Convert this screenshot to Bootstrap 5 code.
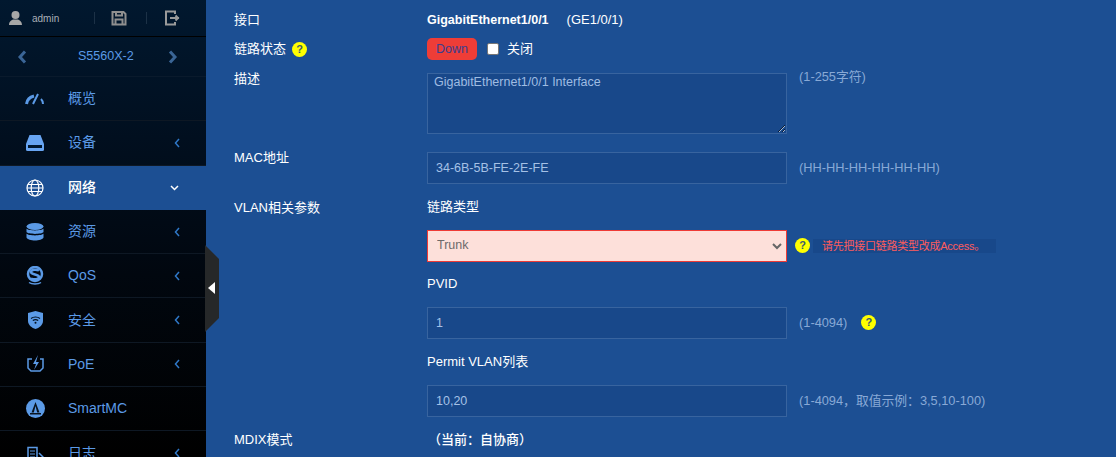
<!DOCTYPE html>
<html lang="zh">
<head>
  <meta charset="UTF-8" />
  <title>S5560X-2</title>
  <link href="https://cdn.jsdelivr.net/npm/bootstrap@5.3.3/dist/css/bootstrap.min.css" rel="stylesheet">
  <style>
    html, body { height: 457px; overflow: hidden; }
    body { background: #1c4f93; font-family: "Liberation Sans", "Noto Sans CJK SC", sans-serif; font-size: 13px; color: #fff; }
    .shell { height: 457px; }
    .side { width: 206px; height: 457px; flex: none; overflow: hidden; background: linear-gradient(180deg, #01182f 0%, #010f1f 30%, #01070f 60%, #000 100%); }
    .side-top { height: 37px; flex: none; border-bottom: 1px solid #000; padding-left: 8px; color: #a9b0b8; font-size: 10px; }
    .side-top .tsep { width: 1px; height: 12px; background: #1c3146; }
    .side-dev { height: 40px; flex: none; border-bottom: 1px solid #0a1a2c; color: #5b9ae6; font-size: 12.5px; padding-left: 17px; }
    .side-item { height: 44.3px; flex: none; border-bottom: 1px solid #0e1824; color: #5b9ae6; font-size: 14px; }
    .side-item.on { background: #1c4f93; color: #fff; font-weight: 500; border-bottom: 0; }
    .ico { width: 22px; margin-left: 24px; margin-right: 22px; display: flex; justify-content: center; flex: none; }
    .arw { margin-left: auto; margin-right: 26px; }
    .handle { position: absolute; left: 205px; top: 245px; width: 14px; height: 87px; background: #262829; clip-path: polygon(0 0, 100% 14px, 100% 73px, 0 100%); }
    .handle i { position: absolute; left: 3px; top: 37px; border-style: solid; border-width: 6px 7px 6px 0; border-color: transparent #fff transparent transparent; }
    .main { padding-left: 28px; position: relative; min-width: 0; }
    .lbl { width: 193px; flex: none; }
    .fld { width: 360px; flex: none; }
    .fbox, .fbox:focus { background: #18488a; border: 1px solid #38649f; border-radius: 0; color: #a5c1e6; font-size: 12.5px; height: 32px; padding: 0 8px; box-shadow: none; }
    textarea.fbox, textarea.fbox:focus { height: 61px; padding: 1px 6px; line-height: 14px; color: #9fbce2; font-size: 12.5px; }
    .hint { color: #88a9d6; margin-left: 12px; font-size: 12.8px; }
    .sel, .sel:focus { background-color: #fde0da; background-image: url("data:image/svg+xml,%3csvg xmlns='http://www.w3.org/2000/svg' viewBox='0 0 10 8'%3e%3cpath fill='none' stroke='%23666' stroke-width='2' d='M1 2l4 4 4-4'/%3e%3c/svg%3e"); background-size: 10px 8px; background-position: right 4px center; border: 1px solid #ef3b36; border-radius: 0; color: #6d6a6a; font-size: 12.5px; height: 32px; padding: 0 9px; box-shadow: none; }
    .qm { width: 15px; height: 15px; border-radius: 50%; background: #ff0; color: #3c5a6e; font-size: 11px; font-weight: bold; line-height: 15px; text-align: center; display: inline-block; flex: none; }
    .errtxt { background: #18488a; color: #ff5c5c; font-size: 11px; letter-spacing: -.25px; line-height: 14px; padding: 0 9px; width: 183px; margin-left: 3px; white-space: nowrap; height: 14px; }
    .downbtn { background: #ee3d37; color: #3a3f8f; border-radius: 5px; width: 50px; height: 22px; line-height: 22px; text-align: center; font-size: 12.5px; }
    .chk { width: 12px; height: 12px; margin: 0 8px 0 10px; border-radius: 2px; background: #fff; border: 1px solid #767676; flex: none; }
    .r-name { height: 40px; }
    .r-status { height: 22px; margin-top: -2px; }
    .sub { height: 23px; }
    .ifname { font-size: 12.5px; }
  </style>
</head>
<body>
  <div class="d-flex shell position-relative">
    <div class="side d-flex flex-column">
      <div class="side-top d-flex align-items-center">
        <svg width="16" height="16" viewBox="0 0 16 16" fill="#a7a7a7"><circle cx="7.500" cy="5" r="4"/><path d="M1 15c0-4 3-5 4-5.500h5c1 .5 4 1.500 4 5.500z"/></svg>
        <span class="ms-2" style="width:46px">admin</span>
        <span class="tsep ms-3"></span>
        <svg class="ms-3" width="16" height="16" viewBox="0 0 16 16" fill="none" stroke="#8f8f8f" stroke-width="2"><path d="M1.500 2h11l2 2v10.500h-13z"/><path d="M5 2v3.500h6V2M4.500 14.500V9.500h7v5"/></svg>
        <span class="tsep" style="margin-left:19px"></span>
        <svg style="margin-left:17px" width="16" height="16" viewBox="0 0 16 16" fill="none" stroke="#9a9a9a" stroke-width="2"><path d="M11 4V1.500H2v13h9V12M6 8h9"/><path d="M11.500 5.500L14 8l-2.500 2.500"/></svg>
      </div>
      <div class="side-dev d-flex align-items-center">
        <svg width="10" height="14" viewBox="0 0 10 14" fill="none" stroke="#3a6596" stroke-width="3"><path d="M8 1.500L3 7l5 5.500"/></svg>
        <span style="width:90px;margin-left:51px">S5560X-2</span>
        <svg width="10" height="14" viewBox="0 0 10 14" fill="none" stroke="#3a6596" stroke-width="3"><path d="M2 1.500L7 7l-5 5.500"/></svg>
      </div>

      <div class="side-item d-flex align-items-center">
        <span class="ico"><svg width="20" height="12" viewBox="0 0 20 12" fill="none" stroke="#5b9ae6"><path stroke-width="3" d="M1.500 11C2 7 5 4 9 3"/><path stroke-width="2" d="M8 11l5-10M18 11c0-2-1-4-2-5"/></svg></span>
        <span>概览</span>
      </div>
      <div class="side-item d-flex align-items-center">
        <span class="ico"><svg width="18" height="16" viewBox="0 0 18 16" fill="#68a5f2"><path d="M3.500 0h11L18 9v5.500a1.500 1.500 0 0 1-1.500 1.500h-15A1.500 1.500 0 0 1 0 14.500V9z"/><rect x="2" y="10" width="14" height="3" fill="#01182f"/></svg></span>
        <span>设备</span>
        <svg class="arw" width="6" height="10" viewBox="0 0 6 10" fill="none" stroke="#2f78c8" stroke-width="1.500"><path d="M5 1L1.500 5 5 9"/></svg>
      </div>
      <div class="side-item on d-flex align-items-center">
        <span class="ico"><svg width="18" height="18" viewBox="0 0 18 18" fill="none" stroke="#fff" stroke-width="1.200"><circle cx="9" cy="9" r="8"/><ellipse cx="9" cy="9" rx="3.800" ry="8"/><path d="M2 5.500h14M1 9h16M2 12.500h14"/></svg></span>
        <span>网络</span>
        <svg class="arw" style="margin-right:27px" width="9" height="6" viewBox="0 0 9 6" fill="none" stroke="#fff" stroke-width="1.500"><path d="M1 1l3.500 3.500L8 1"/></svg>
      </div>
      <div class="side-item d-flex align-items-center">
        <span class="ico"><svg width="18" height="18" viewBox="0 0 18 18" fill="#5b9ae6"><ellipse cx="9" cy="3.500" rx="8.500" ry="3.500"/><path d="M.5 5.500C2 8 16 8 17.500 5.500V9C16 11.500 2 11.500 .5 9zM.5 10.500C2 13 16 13 17.500 10.500V14.500C16 18.500 2 18.500 .5 14.500z"/></svg></span>
        <span>资源</span>
        <svg class="arw" width="6" height="10" viewBox="0 0 6 10" fill="none" stroke="#2f78c8" stroke-width="1.500"><path d="M5 1L1.500 5 5 9"/></svg>
      </div>
      <div class="side-item d-flex align-items-center">
        <span class="ico"><svg width="18" height="19" viewBox="0 0 18 19" fill="none"><circle cx="9" cy="8" r="7" stroke="#5b9ae6" stroke-width="2.500"/><path d="M13 4.500C10 3 5 3.500 5 6c0 3 8 2 8 5 0 2.500-5 3-8 1.500" stroke="#5b9ae6" stroke-width="2.500"/><path d="M3 16.500c3 2 9 2 12 0" stroke="#5b9ae6" stroke-width="1.500"/></svg></span>
        <span>QoS</span>
        <svg class="arw" width="6" height="10" viewBox="0 0 6 10" fill="none" stroke="#2f78c8" stroke-width="1.500"><path d="M5 1L1.500 5 5 9"/></svg>
      </div>
      <div class="side-item d-flex align-items-center">
        <span class="ico"><svg width="15" height="18" viewBox="0 0 15 18" fill="#5b9ae6"><path d="M7.500 0L15 2v8c0 4-4 7-7.500 8C4 17 0 14 0 10V2z"/><path d="M3 7.500c2.500-2 6.500-2 9 0M4.800 9.500c1.500-1 4-1 5.400 0" fill="none" stroke="#021020" stroke-width="1.100"/><circle cx="7.500" cy="11.800" r="1" fill="#021020"/></svg></span>
        <span>安全</span>
        <svg class="arw" width="6" height="10" viewBox="0 0 6 10" fill="none" stroke="#2f78c8" stroke-width="1.500"><path d="M5 1L1.500 5 5 9"/></svg>
      </div>
      <div class="side-item d-flex align-items-center">
        <span class="ico"><svg width="17" height="18" viewBox="0 0 17 18" fill="none"><path d="M5 4H1v9l3 3h9l3-3V4h-3" stroke="#5b9ae6" stroke-width="1.500"/><path d="M11 0L6 9h3l-2 6 5-8H9z" fill="#5b9ae6"/></svg></span>
        <span>PoE</span>
        <svg class="arw" width="6" height="10" viewBox="0 0 6 10" fill="none" stroke="#2f78c8" stroke-width="1.500"><path d="M5 1L1.500 5 5 9"/></svg>
      </div>
      <div class="side-item d-flex align-items-center">
        <span class="ico"><svg width="19" height="19" viewBox="0 0 19 19"><circle cx="9.500" cy="9.500" r="9.500" fill="#5b9ae6"/><path d="M9.500 3L5.500 13.500h2.300l1.700-6.500 1.700 6.500h2.300zM4 14h11v1.500H4z" fill="#0a1420"/></svg></span>
        <span>SmartMC</span>
      </div>
      <div class="side-item d-flex align-items-center">
        <span class="ico"><svg width="17" height="19" viewBox="0 0 17 19" fill="none" stroke="#5b9ae6"><path stroke-width="1.500" d="M1 3.500h9V18H1z"/><path stroke-width="1.200" d="M3 7h5M3 10h5M3 13h5"/><path stroke-width="1.500" d="M12 9l4 4-3 3"/></svg></span>
        <span>日志</span>
        <svg class="arw" width="6" height="10" viewBox="0 0 6 10" fill="none" stroke="#2f78c8" stroke-width="1.500"><path d="M5 1L1.500 5 5 9"/></svg>
      </div>
    </div>
    <div class="handle"><i></i></div>

    <div class="main flex-grow-1">
      <div class="d-flex align-items-center r-name">
        <div class="lbl">接口</div>
        <div><b class="ifname">GigabitEthernet1/0/1</b><span style="margin-left:18px">(GE1/0/1)</span></div>
      </div>
      <div class="d-flex align-items-center r-status">
        <div class="lbl d-flex align-items-center">链路状态<span class="qm" style="margin-left:6px">?</span></div>
        <div class="downbtn">Down</div>
        <span class="chk"></span><span>关闭</span>
      </div>
      <div class="d-flex mt-0" style="padding-top:13px">
        <div class="lbl" style="margin-top:-4px">描述</div>
        <textarea class="form-control fbox fld">GigabitEthernet1/0/1 Interface</textarea>
        <div class="hint" style="margin-top:-6px">(1-255字符)</div>
      </div>
      <div class="d-flex" style="margin-top:18px">
        <div class="lbl" style="margin-top:-4px">MAC地址</div>
        <input class="form-control fbox fld" value="34-6B-5B-FE-2E-FE">
        <div class="hint d-flex align-items-center">(HH-HH-HH-HH-HH-HH)</div>
      </div>
      <div class="d-flex" style="margin-top:14px">
        <div class="lbl">VLAN相关参数</div>
        <div style="margin-top:-1px">链路类型</div>
      </div>
      <div class="d-flex align-items-center" style="margin-top:12px;margin-left:193px">
        <select class="form-select sel fld"><option>Trunk</option></select>
        <span class="qm" style="margin-left:8px">?</span>
        <span class="errtxt">请先把接口链路类型改成Access。</span>
      </div>
      <div class="sub d-flex align-items-center" style="margin:11px 0 0 193px">PVID</div>
      <div class="d-flex align-items-center" style="margin:11px 0 0 193px">
        <input class="form-control fbox fld" value="1">
        <span class="hint">(1-4094)</span>
        <span class="qm" style="margin-left:14px">?</span>
      </div>
      <div class="sub d-flex align-items-center" style="margin:12px 0 0 193px">Permit VLAN列表</div>
      <div class="d-flex align-items-center" style="margin:11px 0 0 193px">
        <input class="form-control fbox fld" value="10,20">
        <span class="hint">(1-4094，取值示例：3,5,10-100)</span>
      </div>
      <div class="d-flex align-items-center" style="margin-top:13px">
        <div class="lbl">MDIX模式</div>
        <div style="margin-left:1px;font-weight:500">（当前：自协商）</div>
      </div>
    </div>
  </div>
  <script src="https://cdn.jsdelivr.net/npm/bootstrap@5.3.3/dist/js/bootstrap.bundle.min.js"></script>
</body>
</html>
